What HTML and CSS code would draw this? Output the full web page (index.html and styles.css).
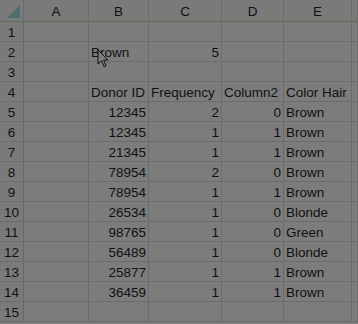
FILE: index.html
```html
<!DOCTYPE html>
<html lang="en">
<head>
    <meta charset="UTF-8">
    <title>Sheet</title>
    <link rel="stylesheet" href="styles.css">
</head>
<body>
    <div class="sheet">
        <!-- column headers -->
        <div class="corner"><span class="corner-mark"></span></div>
        <div class="colhead">A</div>
        <div class="colhead">B</div>
        <div class="colhead">C</div>
        <div class="colhead">D</div>
        <div class="colhead">E</div>
        <div class="colhead"></div>

        <div class="rowhead">1</div><div class="cell"></div><div class="cell"></div><div class="cell"></div><div class="cell"></div><div class="cell"></div><div class="cell"></div>
        <div class="rowhead">2</div><div class="cell"></div><div class="cell">Brown</div><div class="cell num">5</div><div class="cell"></div><div class="cell"></div><div class="cell"></div>
        <div class="rowhead">3</div><div class="cell"></div><div class="cell"></div><div class="cell"></div><div class="cell"></div><div class="cell"></div><div class="cell"></div>
        <div class="rowhead">4</div><div class="cell"></div><div class="cell">Donor ID</div><div class="cell">Frequency</div><div class="cell">Column2</div><div class="cell">Color Hair</div><div class="cell"></div>
        <div class="rowhead">5</div><div class="cell"></div><div class="cell num">12345</div><div class="cell num">2</div><div class="cell num">0</div><div class="cell">Brown</div><div class="cell"></div>
        <div class="rowhead">6</div><div class="cell"></div><div class="cell num">12345</div><div class="cell num">1</div><div class="cell num">1</div><div class="cell">Brown</div><div class="cell"></div>
        <div class="rowhead">7</div><div class="cell"></div><div class="cell num">21345</div><div class="cell num">1</div><div class="cell num">1</div><div class="cell">Brown</div><div class="cell"></div>
        <div class="rowhead">8</div><div class="cell"></div><div class="cell num">78954</div><div class="cell num">2</div><div class="cell num">0</div><div class="cell">Brown</div><div class="cell"></div>
        <div class="rowhead">9</div><div class="cell"></div><div class="cell num">78954</div><div class="cell num">1</div><div class="cell num">1</div><div class="cell">Brown</div><div class="cell"></div>
        <div class="rowhead">10</div><div class="cell"></div><div class="cell num">26534</div><div class="cell num">1</div><div class="cell num">0</div><div class="cell">Blonde</div><div class="cell"></div>
        <div class="rowhead">11</div><div class="cell"></div><div class="cell num">98765</div><div class="cell num">1</div><div class="cell num">0</div><div class="cell">Green</div><div class="cell"></div>
        <div class="rowhead">12</div><div class="cell"></div><div class="cell num">56489</div><div class="cell num">1</div><div class="cell num">0</div><div class="cell">Blonde</div><div class="cell"></div>
        <div class="rowhead">13</div><div class="cell"></div><div class="cell num">25877</div><div class="cell num">1</div><div class="cell num">1</div><div class="cell">Brown</div><div class="cell"></div>
        <div class="rowhead">14</div><div class="cell"></div><div class="cell num">36459</div><div class="cell num">1</div><div class="cell num">1</div><div class="cell">Brown</div><div class="cell"></div>
        <div class="rowhead">15</div><div class="cell"></div><div class="cell"></div><div class="cell"></div><div class="cell"></div><div class="cell"></div><div class="cell"></div>
    </div>

    <!-- mouse pointer over B2 -->
    <svg class="pointer" width="13" height="20" viewBox="0 0 13 20">
        <path d="M1 1 L1 15 L4.5 11.8 L7 17.5 L9 16.6 L6.6 11 L11 11 Z" fill="#7e7e7e" stroke="#111" stroke-width="1" stroke-linejoin="round"/>
    </svg>
</body>
</html>
```

FILE: styles.css
```css
body {
    margin: 0;
    padding: 0;
    background-color: #7c7c7c;
    font-family: 'Liberation Sans', Arial, sans-serif;
    font-size: 13.5px;
    color: #111;
    overflow: hidden;
}
.sheet {
    display: grid;
    grid-template-columns: 24px 65px 60px 73px 62px 68px 6px;
    grid-template-rows: 22px repeat(15, 20px);
}
.corner,
.colhead {
    background-color: #7a7a7a;
    border-right: 1px solid #6c6c6c;
    border-bottom: 1px solid #5f7052;
    display: flex;
    align-items: center;
    justify-content: center;
    padding-top: 2px;
}
.corner {
    position: relative;
}
.corner-mark {
    position: absolute;
    right: 3px;
    bottom: 3px;
    width: 0;
    height: 0;
    border-left: 13px solid transparent;
    border-bottom: 13px solid #4e6e6e;
}
.rowhead {
    background-color: #7a7a7a;
    border-right: 1px solid #5f6e62;
    border-bottom: 1px solid #6c6c6c;
    display: flex;
    align-items: flex-end;
    justify-content: center;
    padding-bottom: 1px;
    line-height: 15px;
}
.cell {
    border-right: 1px solid #6c6c6c;
    border-bottom: 1px solid #6c6c6c;
    display: flex;
    align-items: flex-end;
    padding: 0 2px 1px 2px;
    line-height: 15px;
    white-space: nowrap;
    overflow: hidden;
}
.num {
    justify-content: flex-end;
}
.pointer {
    position: absolute;
    left: 97px;
    top: 49px;
}
```
